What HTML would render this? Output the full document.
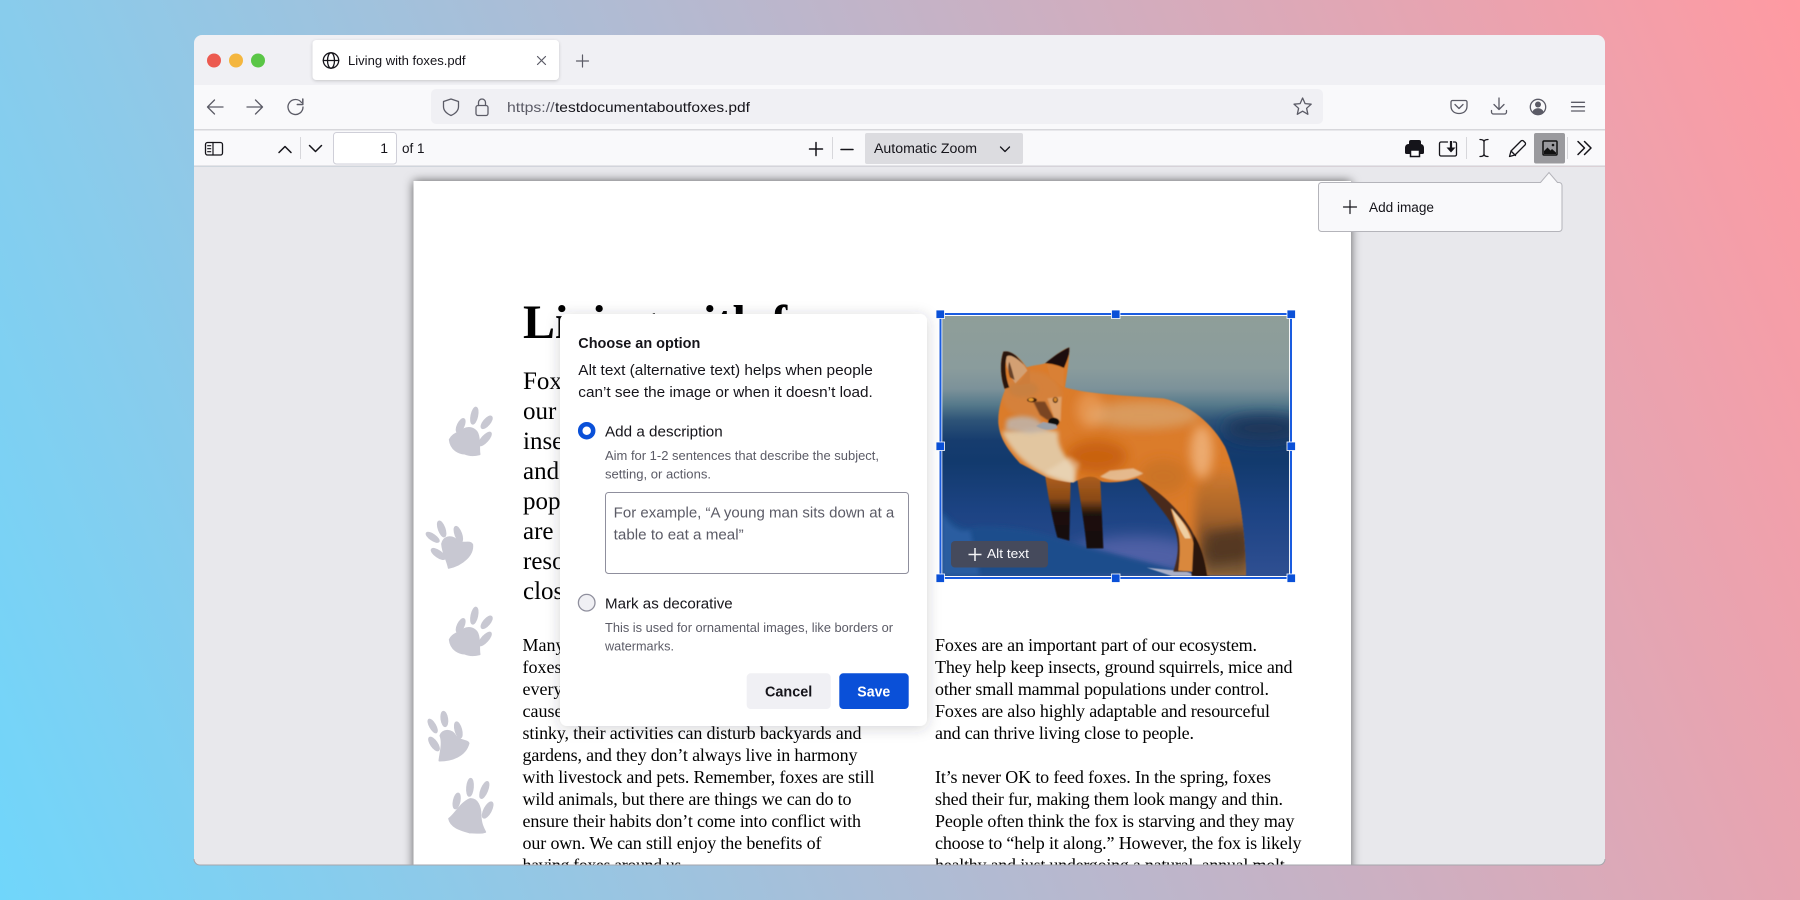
<!DOCTYPE html>
<html lang="en"><head><meta charset="utf-8"><title>Living with foxes.pdf</title>
<style>
html,body{margin:0;padding:0;width:1800px;height:900px;overflow:hidden;background:linear-gradient(68deg,#70d6fb 0%,#ff9aa2 100%)}
svg{display:block;position:absolute;left:0;top:0}
text{font-family:"Liberation Sans",sans-serif;fill:#15141a;white-space:pre}
.s text{font-family:"Liberation Serif",serif;fill:#000;font-size:18px}
.i{fill:none;stroke:#5b5b66;stroke-width:1.3;stroke-linecap:round;stroke-linejoin:round}
.k{fill:none;stroke:#15141a;stroke-width:1.5;stroke-linecap:round;stroke-linejoin:round}
.g{fill:#5b5b66}
.p{fill:#c8c8d2;stroke:#c8c8d2;stroke-width:5;stroke-linejoin:round}
</style></head><body>
<svg width="1800" height="900" viewBox="0 0 1800 900" xmlns="http://www.w3.org/2000/svg">
<defs>
<clipPath id="win"><path d="M202 35H1597a8 8 0 0 1 8 8V859a6 6 0 0 1-6 6H200a6 6 0 0 1-6-6V43a8 8 0 0 1 8-8z"/></clipPath>
<filter id="ps" x="-5%" y="-5%" width="110%" height="110%"><feDropShadow dx="0" dy="0" stdDeviation="5" flood-color="#000" flood-opacity=".62"/></filter>
<filter id="ds" x="-15%" y="-15%" width="130%" height="130%"><feDropShadow dx="0" dy="2" stdDeviation="7" flood-color="#3a3944" flood-opacity=".22"/></filter>
<filter id="ts" x="-5%" y="-10%" width="110%" height="130%"><feDropShadow dx="0" dy="1" stdDeviation="1.5" flood-color="#000" flood-opacity=".18"/></filter>
<filter id="b1"><feGaussianBlur stdDeviation="1.5"/></filter>
<filter id="b2" x="-30%" y="-30%" width="160%" height="160%"><feGaussianBlur stdDeviation="6"/></filter>
<filter id="b4" x="-50%" y="-50%" width="200%" height="200%"><feGaussianBlur stdDeviation="16"/></filter>
<filter id="b3" x="-50%" y="-100%" width="200%" height="300%"><feGaussianBlur stdDeviation="22"/></filter>
<linearGradient id="bg" x1="0" y1="0" x2="0" y2="1">
<stop offset="0" stop-color="#8f9e99"/><stop offset=".2" stop-color="#8a9c9c"/><stop offset=".28" stop-color="#7c929a"/><stop offset=".34" stop-color="#567a8b"/><stop offset=".4" stop-color="#2e5478"/><stop offset=".48" stop-color="#163c6e"/><stop offset=".56" stop-color="#123a6d"/><stop offset=".75" stop-color="#1c4383"/><stop offset="1" stop-color="#2f4f92"/>
</linearGradient>
<linearGradient id="tail" x1="0" y1="0" x2="0" y2="1">
<stop offset="0" stop-color="#d07a2e"/><stop offset=".4" stop-color="#a8642a"/><stop offset=".75" stop-color="#5e4128"/><stop offset="1" stop-color="#86653f"/>
</linearGradient>
<linearGradient id="leg1" x1="0" y1="0" x2="0" y2="1">
<stop offset="0" stop-color="#b0601c"/><stop offset=".35" stop-color="#8a4a18"/><stop offset=".55" stop-color="#1f120b"/><stop offset="1" stop-color="#14090a"/>
</linearGradient>
<clipPath id="imgc"><rect x="36" y="48" width="1042" height="780"/></clipPath>
<clipPath id="foxc"><path d="M405 262C470 282 600 288 700 295C780 312 850 375 885 440C925 530 945 680 948 826L832 826C825 780 815 740 790 700C760 640 690 570 620 535C590 545 540 550 515 545C490 520 460 530 430 548C400 545 370 540 345 530L270 490C235 450 210 420 205 370C203 330 215 295 225 270C212 235 208 190 220 155C245 148 275 180 290 202C310 195 330 195 345 190C370 170 395 150 418 142C418 180 412 215 405 262Z"/></clipPath>
</defs>

<g clip-path="url(#win)">
<!-- chrome bars -->
<rect x="194" y="35" width="1411" height="50" fill="#f0f0f4"/>
<rect x="194" y="85" width="1411" height="44" fill="#f9f9fb"/>
<rect x="194" y="129" width="1411" height="1.5" fill="#d7d7db"/>
<rect x="194" y="130.500" width="1411" height="35" fill="#f9f9fb"/>
<rect x="194" y="165.500" width="1411" height="1.2" fill="#cfcfd4"/>
<rect x="194" y="166.700" width="1411" height="700" fill="#e8e8ec"/>

<!-- PDF page -->
<rect x="413.500" y="181" width="937.500" height="720" fill="#fff" filter="url(#ps)"/>

<!-- paws -->
<g class="p">
<g transform="translate(420 400) scale(.3333)">
<ellipse cx="122" cy="77" rx="9" ry="22" transform="rotate(25 122 77)"/>
<ellipse cx="163" cy="47" rx="9" ry="25" transform="rotate(12 163 47)"/>
<ellipse cx="200" cy="67" rx="9" ry="22" transform="rotate(40 200 67)"/>
<ellipse cx="195" cy="117" rx="9" ry="25" transform="rotate(42 195 117)"/>
<path d="M89 119C98 100 116 100 130 88C150 78 170 86 175 107C180 130 176 148 179 163C160 168 145 166 134 161C118 160 92 150 89 119Z"/>
</g>
<g transform="translate(420 600) scale(.3333)">
<ellipse cx="122" cy="77" rx="9" ry="22" transform="rotate(25 122 77)"/>
<ellipse cx="163" cy="47" rx="9" ry="25" transform="rotate(12 163 47)"/>
<ellipse cx="200" cy="67" rx="9" ry="22" transform="rotate(40 200 67)"/>
<ellipse cx="195" cy="117" rx="9" ry="25" transform="rotate(42 195 117)"/>
<path d="M89 119C98 100 116 100 130 88C150 78 170 86 175 107C180 130 176 148 179 163C160 168 145 166 134 161C118 160 92 150 89 119Z"/>
</g>
<g transform="translate(420 400) scale(.3333)">
<ellipse cx="38" cy="412" rx="8" ry="22" transform="rotate(-55 38 412)"/>
<ellipse cx="65" cy="387" rx="9" ry="24" transform="rotate(-20 65 387)"/>
<ellipse cx="115" cy="403" rx="9" ry="24" transform="rotate(-20 115 403)"/>
<ellipse cx="55" cy="462" rx="9" ry="24" transform="rotate(-55 55 462)"/>
<path d="M66 432C72 406 98 406 114 424C128 434 150 420 157 434C160 465 128 495 86 504C82 480 68 462 66 432Z"/>
</g>
<g transform="translate(420 700) scale(.3333)">
<ellipse cx="38" cy="78" rx="8" ry="22" transform="rotate(-30 38 78)"/>
<ellipse cx="73" cy="57" rx="9" ry="22" transform="rotate(-8 73 57)"/>
<ellipse cx="115" cy="90" rx="9" ry="24" transform="rotate(-15 115 90)"/>
<ellipse cx="42" cy="132" rx="9" ry="23" transform="rotate(-35 42 132)"/>
<path d="M61 107C68 86 96 88 107 108C117 124 144 120 146 130C136 168 95 182 58 182C60 160 70 130 61 107Z"/>
<ellipse cx="110" cy="303" rx="9" ry="23" transform="rotate(12 110 303)"/>
<ellipse cx="150" cy="262" rx="9" ry="26" transform="rotate(5 150 262)"/>
<ellipse cx="193" cy="270" rx="9" ry="26" transform="rotate(22 193 270)"/>
<ellipse cx="203" cy="330" rx="10" ry="26" transform="rotate(28 203 330)"/>
<path d="M87 356C105 344 122 308 150 297C172 295 182 320 182 345C182 370 190 385 196 396C180 402 155 396 150 398C122 390 92 382 87 356Z"/>
</g>
</g>

<!-- PDF text -->
<text x="523" y="338" style="font-family:'Liberation Serif',serif;font-size:48px;font-weight:bold;fill:#000">Living with foxes</text>
<g style="font-size:25px">
<text x="523" y="389" style="font-family:'Liberation Serif',serif;fill:#000">Foxes</text>
<text x="523" y="419" style="font-family:'Liberation Serif',serif;fill:#000">our</text>
<text x="523" y="449" style="font-family:'Liberation Serif',serif;fill:#000">insects</text>
<text x="523" y="479" style="font-family:'Liberation Serif',serif;fill:#000">and</text>
<text x="523" y="509" style="font-family:'Liberation Serif',serif;fill:#000">populations</text>
<text x="523" y="539" style="font-family:'Liberation Serif',serif;fill:#000">are</text>
<text x="523" y="569" style="font-family:'Liberation Serif',serif;fill:#000">resourceful</text>
<text x="523" y="599" style="font-family:'Liberation Serif',serif;fill:#000">close</text>
</g>
<g class="s">
<text x="522.500" y="651">Many people</text>
<text x="522.500" y="673">foxes as</text>
<text x="522.500" y="695">every day</text>
<text x="522.500" y="717">cause of</text>
<text x="522.500" y="739" textLength="339">stinky, their activities can disturb backyards and</text>
<text x="522.500" y="761" textLength="335">gardens, and they don’t always live in harmony</text>
<text x="522.500" y="783" textLength="352">with livestock and pets. Remember, foxes are still</text>
<text x="522.500" y="805" textLength="329">wild animals, but there are things we can do to</text>
<text x="522.500" y="827" textLength="338.500">ensure their habits don’t come into conflict with</text>
<text x="522.500" y="849" textLength="299">our own. We can still enjoy the benefits of</text>
<text x="522.500" y="871" textLength="163">having foxes around us.</text>
<text x="935" y="651" textLength="322">Foxes are an important part of our ecosystem.</text>
<text x="935" y="673" textLength="357.500">They help keep insects, ground squirrels, mice and</text>
<text x="935" y="695" textLength="334">other small mammal populations under control.</text>
<text x="935" y="717" textLength="335">Foxes are also highly adaptable and resourceful</text>
<text x="935" y="739" textLength="259">and can thrive living close to people.</text>
<text x="935" y="783" textLength="336">It’s never OK to feed foxes. In the spring, foxes</text>
<text x="935" y="805" textLength="348">shed their fur, making them look mangy and thin.</text>
<text x="935" y="827" textLength="359.500">People often think the fox is starving and they may</text>
<text x="935" y="849" textLength="366.500">choose to “help it along.” However, the fox is likely</text>
<text x="935" y="871" textLength="354">healthy and just undergoing a natural, annual molt.</text>
</g>

<!-- Fox image -->
<g transform="translate(930 300) scale(.33333)">
<g clip-path="url(#imgc)">
<rect x="36" y="48" width="1042" height="780" fill="url(#bg)"/>
<ellipse cx="1000" cy="385" rx="120" ry="35" fill="#1f3558" filter="url(#b3)"/>
<ellipse cx="620" cy="770" rx="200" ry="60" fill="#4f60a6" filter="url(#b3)"/>
<!-- snow -->
<path d="M36 630C70 670 100 690 140 680C220 675 320 690 400 720C480 745 600 770 800 828H36Z" fill="#1f4d8c" filter="url(#b2)"/>
<path d="M36 640C60 680 90 700 120 690L150 828H36Z" fill="#2b5da0" filter="url(#b2)"/>
<path d="M650 803L770 815L800 828H725Z" fill="#aab0c8" filter="url(#b1)"/>
<g filter="url(#b1)">
<!-- far rear leg -->
<path d="M780 690L835 690L838 828H785Z" fill="#2a150c"/>
<!-- near rear leg -->
<path d="M620 530C690 570 760 640 792 700L788 815L730 815C745 770 748 730 735 690C710 640 660 590 620 530Z" fill="#4a2c1c"/>
<path d="M722 625C752 655 785 690 790 730L786 815L745 812C750 770 752 730 745 700Z" fill="#d9883c"/>
<path d="M725 625C745 650 772 680 782 715L765 715C750 692 735 660 725 625Z" fill="#efcfa2"/>
<!-- front legs -->
<path d="M345 525L422 535L418 722L382 712C365 650 355 590 345 525Z" fill="url(#leg1)"/>
<path d="M440 525L510 520L520 745L470 745C465 680 450 600 440 525Z" fill="url(#leg1)"/>
<!-- fox silhouette layers -->
<g clip-path="url(#foxc)">
<rect x="190" y="130" width="780" height="710" fill="#db7b2a"/>
<!-- tail -->
<path d="M800 560C870 480 925 500 960 600V840H820C800 740 790 640 800 560Z" fill="url(#tail)" filter="url(#b4)"/>
<path d="M830 700L960 680V770L840 790Z" fill="#4f3422" filter="url(#b4)" opacity=".8"/>
<!-- back highlight -->
<ellipse cx="640" cy="345" rx="170" ry="42" fill="#d9a873" opacity=".7" filter="url(#b4)"/>
<ellipse cx="480" cy="330" rx="42" ry="55" fill="#f0ad72" opacity=".5" filter="url(#b4)"/>
<ellipse cx="815" cy="455" rx="34" ry="80" fill="#f2bb88" opacity=".75" filter="url(#b4)"/>
<ellipse cx="500" cy="470" rx="90" ry="50" fill="#c65e0c" opacity=".85" filter="url(#b4)"/>
<ellipse cx="700" cy="530" rx="70" ry="50" fill="#c87228" opacity=".8" filter="url(#b4)"/>
<!-- belly fringe -->
<path d="M510 530C560 550 600 540 640 520L610 505L540 512Z" fill="#ead5b8" opacity=".7" filter="url(#b1)"/>
<!-- chest -->
<path d="M215 395C250 470 320 530 435 555L432 500C405 470 380 440 385 395L330 385Z" fill="#e2c6a0" filter="url(#b2)"/>
<path d="M340 520L430 550L450 490L420 470Z" fill="#efe0c8" opacity=".45" filter="url(#b2)"/>
<!-- head -->
<ellipse cx="305" cy="285" rx="90" ry="72" fill="#d5813a" filter="url(#b2)"/>
<ellipse cx="280" cy="268" rx="45" ry="24" fill="#c9803f" filter="url(#b2)"/>
<path d="M230 358C260 345 295 346 322 358L358 392L300 400L226 390Z" fill="#bfb6ae" opacity=".85" filter="url(#b2)"/>
<path d="M310 305L345 305L372 355L352 360L330 345Z" fill="#7a4520" filter="url(#b1)"/>
<path d="M352 295L395 290L392 365L372 352Z" fill="#dfa068" filter="url(#b1)"/>
<!-- ears -->
<path d="M230 160C255 160 280 190 292 212L256 250C235 220 222 190 230 160Z" fill="#d3a073"/>
<path d="M238 185C245 205 250 225 254 240L240 232C234 215 233 198 238 185Z" fill="#4d2a18" opacity=".8"/>
<path d="M214 270C202 215 206 160 224 148C245 150 270 178 282 195C255 168 236 162 230 170C224 195 226 232 238 262Z" fill="#2c170e"/>
<path d="M262 255C280 235 290 215 300 205L300 250Z" fill="#cd7d3a"/>
<path d="M420 140C400 150 365 170 345 190C365 190 385 196 402 204C412 180 420 160 420 140Z" fill="#1f110c"/>
<path d="M350 192L402 204L400 262L360 230Z" fill="#d98034"/>
</g>
<ellipse cx="306" cy="300" rx="15" ry="7" fill="#40200e"/>
<ellipse cx="303" cy="299" rx="8" ry="5" fill="#e79a2e"/>
<ellipse cx="376" cy="300" rx="8" ry="9" fill="#40200e"/>
<ellipse cx="376" cy="299" rx="5" ry="6" fill="#d98a2a"/>
<ellipse cx="371" cy="366" rx="17" ry="13" fill="#0e0c10"/>
<path d="M318 378C340 392 365 392 382 384L378 374L340 366Z" fill="#9ba0a8"/>
</g>
</g>
</g>
<!-- Selection box -->
<rect x="940.500" y="314" width="350.500" height="264" fill="none" stroke="#fff" stroke-width="3.600"/>
<rect x="940.500" y="314" width="350.500" height="264" fill="none" stroke="#1a5ce0" stroke-width="2"/>
<g fill="#0a50d8" stroke="#fff" stroke-width=".8">
<rect x="936" y="310" width="8.500" height="8.500"/><rect x="1111.500" y="310" width="8.500" height="8.500"/><rect x="1287" y="310" width="8.500" height="8.500"/>
<rect x="936" y="442" width="8.500" height="8.500"/><rect x="1287" y="442" width="8.500" height="8.500"/>
<rect x="936" y="574" width="8.500" height="8.500"/><rect x="1111.500" y="574" width="8.500" height="8.500"/><rect x="1287" y="574" width="8.500" height="8.500"/>
</g>
<!-- Alt text button -->
<rect x="951" y="541" width="97" height="26.500" rx="4" fill="#454a5c"/>
<path d="M975 548v13M968.500 554.500h13" stroke="#f4f4f6" stroke-width="1.500" fill="none"/>
<text x="987" y="558" style="font-size:13px;fill:#fbfbfe" textLength="42" lengthAdjust="spacingAndGlyphs">Alt text</text>

<!-- Tab strip -->
<circle cx="214" cy="60.500" r="7" fill="#ec5a50"/><circle cx="236" cy="60.500" r="7" fill="#f4b63e"/><circle cx="258" cy="60.500" r="7" fill="#5ac646"/>
<rect x="312.500" y="40" width="246.500" height="40" rx="4" fill="#fff" filter="url(#ts)"/>
<g class="k" style="stroke-width:1.300"><circle cx="331" cy="60.500" r="7.700"/><ellipse cx="331" cy="60.500" rx="3.500" ry="7.700"/><path d="M323.300 60.500h15.400"/></g>
<text x="348" y="65" style="font-size:12.500px" textLength="117.500" lengthAdjust="spacingAndGlyphs">Living with foxes.pdf</text>
<path class="i" d="M537.500 56.500l8 8M545.500 56.500l-8 8" style="stroke-width:1.200"/>
<path class="i" d="M582.500 55v12M576.500 61h12" style="stroke-width:1.200"/>

<!-- Nav bar -->
<path class="i" d="M223 107H207.500M214.500 100l-7 7 7 7"/>
<path class="i" d="M247 107H262.500M255.500 100l7 7-7 7"/>
<path class="i" d="M301.500 102.500A7.500 7.500 0 1 0 303 107"/>
<path class="i" d="M302.800 99v5.500h-5.500" style="stroke-width:1.500"/>
<rect x="431" y="89" width="892" height="35" rx="5" fill="#f0f0f4"/>
<path class="i" d="M451 99l7.500 2.500v5c0 4-3 7-7.500 9c-4.500-2-7.500-5-7.500-9v-5z"/>
<rect class="i" x="476" y="105.500" width="12" height="10" rx="2"/>
<path class="i" d="M478.500 105.500v-3a3.500 3.500 0 0 1 7 0v3"/>
<text x="507" y="112" style="font-size:14px;fill:#5b5b66" textLength="47.500" lengthAdjust="spacingAndGlyphs">https://</text>
<text x="555" y="112" style="font-size:14px" textLength="195" lengthAdjust="spacingAndGlyphs">testdocumentaboutfoxes.pdf</text>
<polygon class="i" points="1302.600,98 1305.100,103.600 1311.200,104.200 1306.600,108.300 1307.900,114.300 1302.600,111.200 1297.300,114.300 1298.600,108.300 1294,104.200 1300.100,103.600"/>
<path class="i" d="M1452.500 100.500h13a1.500 1.500 0 0 1 1.500 1.500v4c0 4.500-3 7.500-8 7.500s-8-3-8-7.500v-4a1.500 1.500 0 0 1 1.500-1.500z"/>
<path class="i" d="M1455 104.500l4 4 4-4"/>
<path class="i" d="M1499 98v11M1494 104.500l5 5 5-5M1491.500 110.500v1.500a2 2 0 0 0 2 2h11a2 2 0 0 0 2-2v-1.500"/>
<circle class="i" cx="1538" cy="107" r="7.700"/>
<circle class="g" cx="1538" cy="104.500" r="3"/>
<path class="g" d="M1532.500 112c.5-2.500 3-3.800 5.500-3.800s5 1.300 5.500 3.800a7 7 0 0 1-11 0z"/>
<path class="i" d="M1571.500 102.300h13M1571.500 106.700h13M1571.500 111h13"/>

<!-- PDF toolbar -->
<rect class="k" x="205.500" y="142.500" width="17" height="12.500" rx="2" style="stroke-width:1.300"/>
<path class="k" d="M213 142.500v12.500M207.700 145.700h3M207.700 148.700h3M207.700 151.700h3" style="stroke-width:1.200"/>
<path class="k" d="M279 152.500l6-6 6 6"/>
<rect x="300" y="137" width="1" height="22" fill="#d7d7db"/>
<path class="k" d="M309.500 145.500l6 6 6-6"/>
<rect x="333.500" y="132.500" width="63" height="31.500" rx="3" fill="#fff" stroke="#cfcfd8"/>
<text x="388" y="153" text-anchor="end" style="font-size:14px">1</text>
<text x="402" y="153" style="font-size:14px" textLength="22.500" lengthAdjust="spacingAndGlyphs">of 1</text>
<path class="k" d="M816 142.500v13M809.500 149h13"/>
<rect x="832" y="137" width="1" height="22" fill="#d7d7db"/>
<path class="k" d="M841 149.500h12"/>
<rect x="865" y="133" width="158" height="31" rx="2" fill="#dcdce0"/>
<text x="874" y="153" style="font-size:13.500px" textLength="103" lengthAdjust="spacingAndGlyphs">Automatic Zoom</text>
<path class="k" d="M1000.500 147l4.500 4.500 4.500-4.500" style="stroke-width:1.300"/>

<!-- print -->
<path d="M1411 140h8a2 2 0 0 1 2 2v3h-12v-3a2 2 0 0 1 2-2z" fill="#15141a"/>
<path d="M1409.500 144h11a3.500 3.500 0 0 1 3.500 3.500v5a1.500 1.500 0 0 1-1.500 1.500h-16a1.500 1.500 0 0 1-1.500-1.500v-5a3.500 3.500 0 0 1 3.500-3.500z" fill="#15141a"/>
<rect x="1410.500" y="150" width="9" height="6.500" fill="#fff" stroke="#15141a" stroke-width="1.500"/>
<!-- save -->
<path class="k" d="M1447.500 142h-6.500a1.500 1.500 0 0 0-1.500 1.500v11a1.500 1.500 0 0 0 1.500 1.500h14a1.500 1.500 0 0 0 1.500-1.500v-11a1.500 1.500 0 0 0-1.500-1.500h-1.500" style="stroke-width:1.300"/>
<path d="M1451 141v7" stroke="#15141a" stroke-width="2.200"/>
<path d="M1446.500 147.500h9l-4.500 5z" fill="#15141a"/>
<rect x="1466" y="137" width="1" height="22" fill="#d7d7db"/>
<!-- text -->
<path class="k" d="M1480 139.500c2.500 0 4 1 4 2.500v12c0 1.500-1.500 2.500-4 2.500M1488 139.500c-2.500 0-4 1-4 2.500v12c0 1.500 1.500 2.500 4 2.500" style="stroke-width:1.300"/>
<!-- pencil -->
<path class="k" d="M1509.500 156.500l1.500-5.500 10-10a1.800 1.800 0 0 1 2.500 0l1.500 1.500a1.800 1.800 0 0 1 0 2.500l-10 10zM1511 151l4.500 4.500" style="stroke-width:1.300"/>
<!-- image button -->
<rect x="1534" y="133" width="31" height="30.500" rx="2" fill="#9a9a9e"/>
<rect x="1543" y="141" width="14" height="14" rx="1" fill="none" stroke="#111" stroke-width="1.500"/>
<path d="M1544 154v-3l3.500-3.500 3 3 1.500-1.500 4 3.500v1.500z" fill="#111"/>
<circle cx="1553" cy="145" r="1.300" fill="#111"/>
<rect x="1567" y="137" width="1" height="22" fill="#d7d7db"/>
<path class="k" d="M1578 141.500l6.500 6.500-6.500 6.500M1584.500 141.500l6.500 6.500-6.500 6.500"/>

<!-- Add image doorhanger -->
<path transform="translate(-.5 -.5)" d="M1322 183H1541L1549.500 173L1558 183H1559.500a3 3 0 0 1 3 3V229a3 3 0 0 1-3 3H1322a3 3 0 0 1-3-3V186a3 3 0 0 1 3-3z" fill="#f9f9fb" stroke="#b4b4ba"/>
<path class="k" d="M1350 200.500v13M1343.500 207h13" style="stroke-width:1.200"/>
<text x="1369" y="212" style="font-size:13.500px" textLength="65" lengthAdjust="spacingAndGlyphs">Add image</text>

<!-- Dialog -->
<rect x="560" y="314" width="367" height="412" rx="7" fill="#fff" filter="url(#ds)"/>
<text x="578.300" y="347.800" style="font-size:14.500px;font-weight:bold" textLength="122" lengthAdjust="spacingAndGlyphs">Choose an option</text>
<text x="578.300" y="375" style="font-size:14.500px" textLength="294.500" lengthAdjust="spacingAndGlyphs">Alt text (alternative text) helps when people</text>
<text x="578.300" y="397" style="font-size:14.500px" textLength="294.500" lengthAdjust="spacingAndGlyphs">can’t see the image or when it doesn’t load.</text>
<circle cx="586.700" cy="430.700" r="6.500" fill="#fff" stroke="#0a50d8" stroke-width="4.500"/>
<text x="605" y="436.500" style="font-size:14.500px" textLength="117.700" lengthAdjust="spacingAndGlyphs">Add a description</text>
<text x="605" y="460" style="font-size:12.500px;fill:#5b5b66" textLength="274" lengthAdjust="spacingAndGlyphs">Aim for 1-2 sentences that describe the subject,</text>
<text x="605" y="478.500" style="font-size:12.500px;fill:#5b5b66" textLength="106" lengthAdjust="spacingAndGlyphs">setting, or actions.</text>
<rect x="605.500" y="492.500" width="303" height="81" rx="3" fill="#fff" stroke="#8f8f9d" stroke-width="1"/>
<text x="613.700" y="517.300" style="font-size:14.500px;fill:#5b5b66" textLength="280.600" lengthAdjust="spacingAndGlyphs">For example, “A young man sits down at a</text>
<text x="613.700" y="539.300" style="font-size:14.500px;fill:#5b5b66" textLength="130" lengthAdjust="spacingAndGlyphs">table to eat a meal”</text>
<circle cx="586.700" cy="602.700" r="8.300" fill="#f0f0f4" stroke="#8f8f9d" stroke-width="1.300"/>
<text x="605" y="608.500" style="font-size:14.500px" textLength="127.700" lengthAdjust="spacingAndGlyphs">Mark as decorative</text>
<text x="605" y="632" style="font-size:12.500px;fill:#5b5b66" textLength="288" lengthAdjust="spacingAndGlyphs">This is used for ornamental images, like borders or</text>
<text x="605" y="650.500" style="font-size:12.500px;fill:#5b5b66" textLength="69" lengthAdjust="spacingAndGlyphs">watermarks.</text>
<rect x="746.700" y="673.300" width="84" height="35.700" rx="4" fill="#f0f0f4"/>
<text x="765" y="696.500" style="font-size:14.500px;font-weight:bold" textLength="47.300" lengthAdjust="spacingAndGlyphs">Cancel</text>
<rect x="839.300" y="673.300" width="69.400" height="35.700" rx="4" fill="#0a50d8"/>
<text x="857.300" y="696.500" style="font-size:14.500px;font-weight:bold;fill:#fff" textLength="33" lengthAdjust="spacingAndGlyphs">Save</text>
</g>
<!-- window bottom edge -->
<path d="M194 859a6 6 0 0 0 6 6H1599a6 6 0 0 0 6-6" fill="none" stroke="#a6a6ac" stroke-width="1"/>
</svg>
</body></html>
